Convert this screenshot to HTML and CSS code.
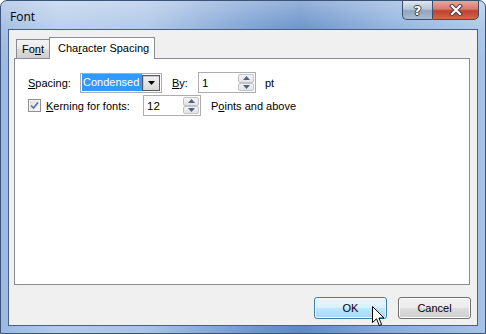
FILE: index.html
```html
<!DOCTYPE html>
<html>
<head>
<meta charset="utf-8">
<link rel="stylesheet" href="styles.css">
</head>
<body>
<div class="window">
  <div class="titlebar">
    <span class="title">Font</span>
    <div class="caption-btns">
      <div class="cap-btn help">?</div>
      <div class="cap-btn close">
        <svg width="16" height="12" viewBox="0 0 16 12"><path d="M4 2 L12 10 M12 2 L4 10" stroke="#3a3a3a" stroke-width="4" fill="none" stroke-linecap="square"/><path d="M4 2 L12 10 M12 2 L4 10" stroke="#fff" stroke-width="2.2" fill="none" stroke-linecap="square"/></svg>
      </div>
    </div>
  </div>
  <div class="client">
    <div class="tabs">
      <div class="tab">Fo<u>n</u>t</div>
      <div class="tab active">Cha<u>r</u>acter Spacing</div>
    </div>
    <div class="panel">
      <div class="row">
        <span class="lbl lbl-spacing"><u>S</u>pacing:</span>
        <div class="combo">
          <span class="combo-text"><span class="sel">Condensed</span></span>
          <span class="combo-btn"><svg width="7" height="4" viewBox="0 0 7 4"><path d="M0 0 H7 L3.5 4 Z" fill="#000"/></svg></span>
        </div>
        <span class="lbl lbl-by"><u>B</u>y:</span>
        <div class="spin">
          <span class="spin-text">1</span>
          <span class="spin-btns">
            <span class="sb up"><svg width="7" height="4" viewBox="0 0 7 4"><path d="M0 4 H7 L3.5 0 Z" fill="#4d6185"/></svg></span>
            <span class="sb down"><svg width="7" height="4" viewBox="0 0 7 4"><path d="M0 0 H7 L3.5 4 Z" fill="#4d6185"/></svg></span>
          </span>
        </div>
        <span class="lbl lbl-pt">pt</span>
      </div>
      <div class="row">
        <span class="check"><svg width="9" height="9" viewBox="0 0 9 9"><path d="M1 4.5 L3.5 7 L8 1.5" stroke="#5a6fa6" stroke-width="1.6" fill="none"/></svg></span>
        <span class="lbl lbl-kern"><u>K</u>erning for fonts:</span>
        <div class="spin">
          <span class="spin-text">12</span>
          <span class="spin-btns">
            <span class="sb up"><svg width="7" height="4" viewBox="0 0 7 4"><path d="M0 4 H7 L3.5 0 Z" fill="#4d6185"/></svg></span>
            <span class="sb down"><svg width="7" height="4" viewBox="0 0 7 4"><path d="M0 0 H7 L3.5 4 Z" fill="#4d6185"/></svg></span>
          </span>
        </div>
        <span class="lbl lbl-points">P<u>o</u>ints and above</span>
      </div>
    </div>
    <div class="buttons">
      <button class="btn btn-ok">OK</button>
      <button class="btn btn-cancel">Cancel</button>
    </div>
  </div>
  <svg class="cursor" width="13" height="21" viewBox="0 0 13 21"><path d="M0.5 0.5 V16.5 L4.5 12.8 L7.3 19.5 L9.6 18.5 L6.9 12 H12 Z" fill="#fff" stroke="#000" stroke-width="1" stroke-linejoin="miter"/></svg>
</div>
</body>
</html>
```
FILE: styles.css
```css
* { box-sizing: border-box; }
html, body { margin: 0; padding: 0; }
body {
  width: 486px;
  height: 334px;
  overflow: hidden;
  font-family: "Liberation Sans", Arial, sans-serif;
  font-size: 11px;
  color: #000;
}
.window {
  position: relative;
  width: 486px;
  height: 334px;
  border: 1px solid #3b5477;
  border-radius: 7px 7px 0 0;
  background:
    linear-gradient(to bottom, rgba(255,255,255,0.35) 0px, rgba(255,255,255,0.1) 28px, rgba(0,0,0,0) 60px, rgba(0,0,0,0) 100%),
    linear-gradient(to right, #9bb9e2 0%, #b3cbea 12%, #a9c3e6 30%, #6f98cf 52%, #5d89c6 62%, #87abdb 80%, #a7c3e7 100%);
  display: flex;
  flex-direction: column;
}
.titlebar {
  height: 28px;
  display: flex;
  align-items: flex-start;
  justify-content: space-between;
  padding: 0 6px 0 9px;
}
.title {
  margin-top: 7px;
  font-family: "Open Sans", "Liberation Sans", sans-serif;
  font-size: 12px;
  color: #000;
}
.caption-btns {
  display: flex;
  margin-top: -1px;
}
.cap-btn {
  height: 20px;
  border: 1px solid #3d4f6c;
  display: flex;
  align-items: center;
  justify-content: center;
}
.help {
  width: 30px;
  border-right: none;
  border-radius: 0 0 0 5px;
  background: linear-gradient(to bottom, #dfe7f1 0%, #b5c5da 45%, #8ea3c0 55%, #a9bdd6 100%);
  font-family: "DejaVu Sans", sans-serif;
  font-weight: bold;
  font-size: 13px;
  color: #fff;
  text-shadow: 1px 0 0 #3a3a3a, -1px 0 0 #3a3a3a, 0 1px 0 #3a3a3a, 0 -1px 0 #3a3a3a;
}
.close {
  width: 47px;
  border-radius: 0 0 5px 0;
  background: linear-gradient(to bottom, #e5a99f 0%, #d57b6c 45%, #c1402c 55%, #d2674f 100%);
}
.client {
  margin: 0 7px 0 7px;
  height: 297px;
  background: #f0f0f0;
  border: 1px solid #4a6184;
  display: flex;
  flex-direction: column;
}
.tabs {
  display: flex;
  align-items: flex-end;
  height: 28px;
  padding-left: 7px;
}
.tab {
  height: 19px;
  padding: 3px 5px 0 5px;
  border: 1px solid #898c95;
  border-bottom: none;
  border-right: none;
  background: linear-gradient(to bottom, #f2f2f2 0%, #ebebeb 50%, #dddddd 51%, #cfcfcf 100%);
  font-size: 11px;
}
.tab.active {
  height: 22px;
  width: 106px;
  border-right: 1px solid #898c95;
  background: #fff;
  margin-bottom: -1px;
  position: relative;
  z-index: 1;
  padding: 4px 0 0 8px;
  font-family: "Liberation Sans", Arial, sans-serif;
  font-size: 11px;
  white-space: nowrap;
}
.panel {
  margin-left: 5px;
  width: 456px;
  height: 227px;
  background: #fff;
  border: 1px solid #898c95;
  padding: 13px 0 0 13px;
  display: flex;
  flex-direction: column;
  gap: 2px;
}
.row {
  display: flex;
  align-items: center;
  height: 21px;
}
.lbl { white-space: nowrap; }
.lbl-spacing { width: 52px; }
.lbl-by { margin-left: 10px; width: 26px; }
.lbl-pt { margin-left: 9px; }
.lbl-kern { margin-left: 5px; width: 97px; }
.lbl-points { margin-left: 10px; }
.combo {
  width: 82px;
  height: 20px;
  border: 1px solid #abadb3;
  background: #fff;
  display: flex;
  align-items: stretch;
  padding: 1px;
}
.combo-text {
  flex: 1;
  display: flex;
  align-items: center;
}
.sel {
  background: #3399ff;
  color: #fff;
  padding: 2px 3px 2px 1px;
  line-height: 13px;
  font-size: 11px;
}
.combo-btn {
  width: 19px;
  border: 1px solid #5a5a5a;
  box-shadow: inset 1px 1px 0 #c8c8c8;
  background: linear-gradient(to bottom, #f2f2f2, #d8d8d8);
  display: flex;
  align-items: center;
  justify-content: center;
}
.spin {
  width: 58px;
  height: 21px;
  border: 1px solid #abadb3;
  background: #fff;
  display: flex;
  padding: 1px 1px 1px 3px;
}
.spin-text {
  flex: 1;
  display: flex;
  align-items: center;
  font-size: 11.5px;
}
.spin-btns {
  width: 16px;
  display: flex;
  flex-direction: column;
}
.sb {
  flex: 1;
  border: 1px solid #c3c3c3;
  border-radius: 2px;
  background: linear-gradient(to bottom, #f4f4f4, #e1e4e9);
  display: flex;
  align-items: center;
  justify-content: center;
}
.check {
  width: 13px;
  height: 13px;
  border: 1px solid #8e8f8f;
  background: linear-gradient(135deg, #dcdcdc, #fafafa);
  box-shadow: inset 0 0 0 1px #f4f4f4;
  display: flex;
  align-items: center;
  justify-content: center;
}
.buttons {
  display: flex;
  justify-content: flex-end;
  gap: 11px;
  margin-top: 12px;
  padding-right: 6px;
}
.btn {
  width: 73px;
  height: 22px;
  border-radius: 3px;
  font-family: "Liberation Sans", Arial, sans-serif;
  font-size: 11px;
  color: #000;
  padding: 0;
}
.btn-ok {
  border: 1px solid #3c7fb1;
  background: linear-gradient(to bottom, #eaf6fd 0%, #d9f0fc 50%, #bee6fd 51%, #a7d9f5 100%);
  box-shadow: inset 0 0 0 1px #f6fbfe;
}
.btn-cancel {
  border: 1px solid #707070;
  background: linear-gradient(to bottom, #f2f2f2 0%, #ebebeb 50%, #dddddd 51%, #cfcfcf 100%);
  box-shadow: inset 0 0 0 1px #fbfbfb;
}
.cursor {
  position: absolute;
  left: 371px;
  top: 305px;
}
```
